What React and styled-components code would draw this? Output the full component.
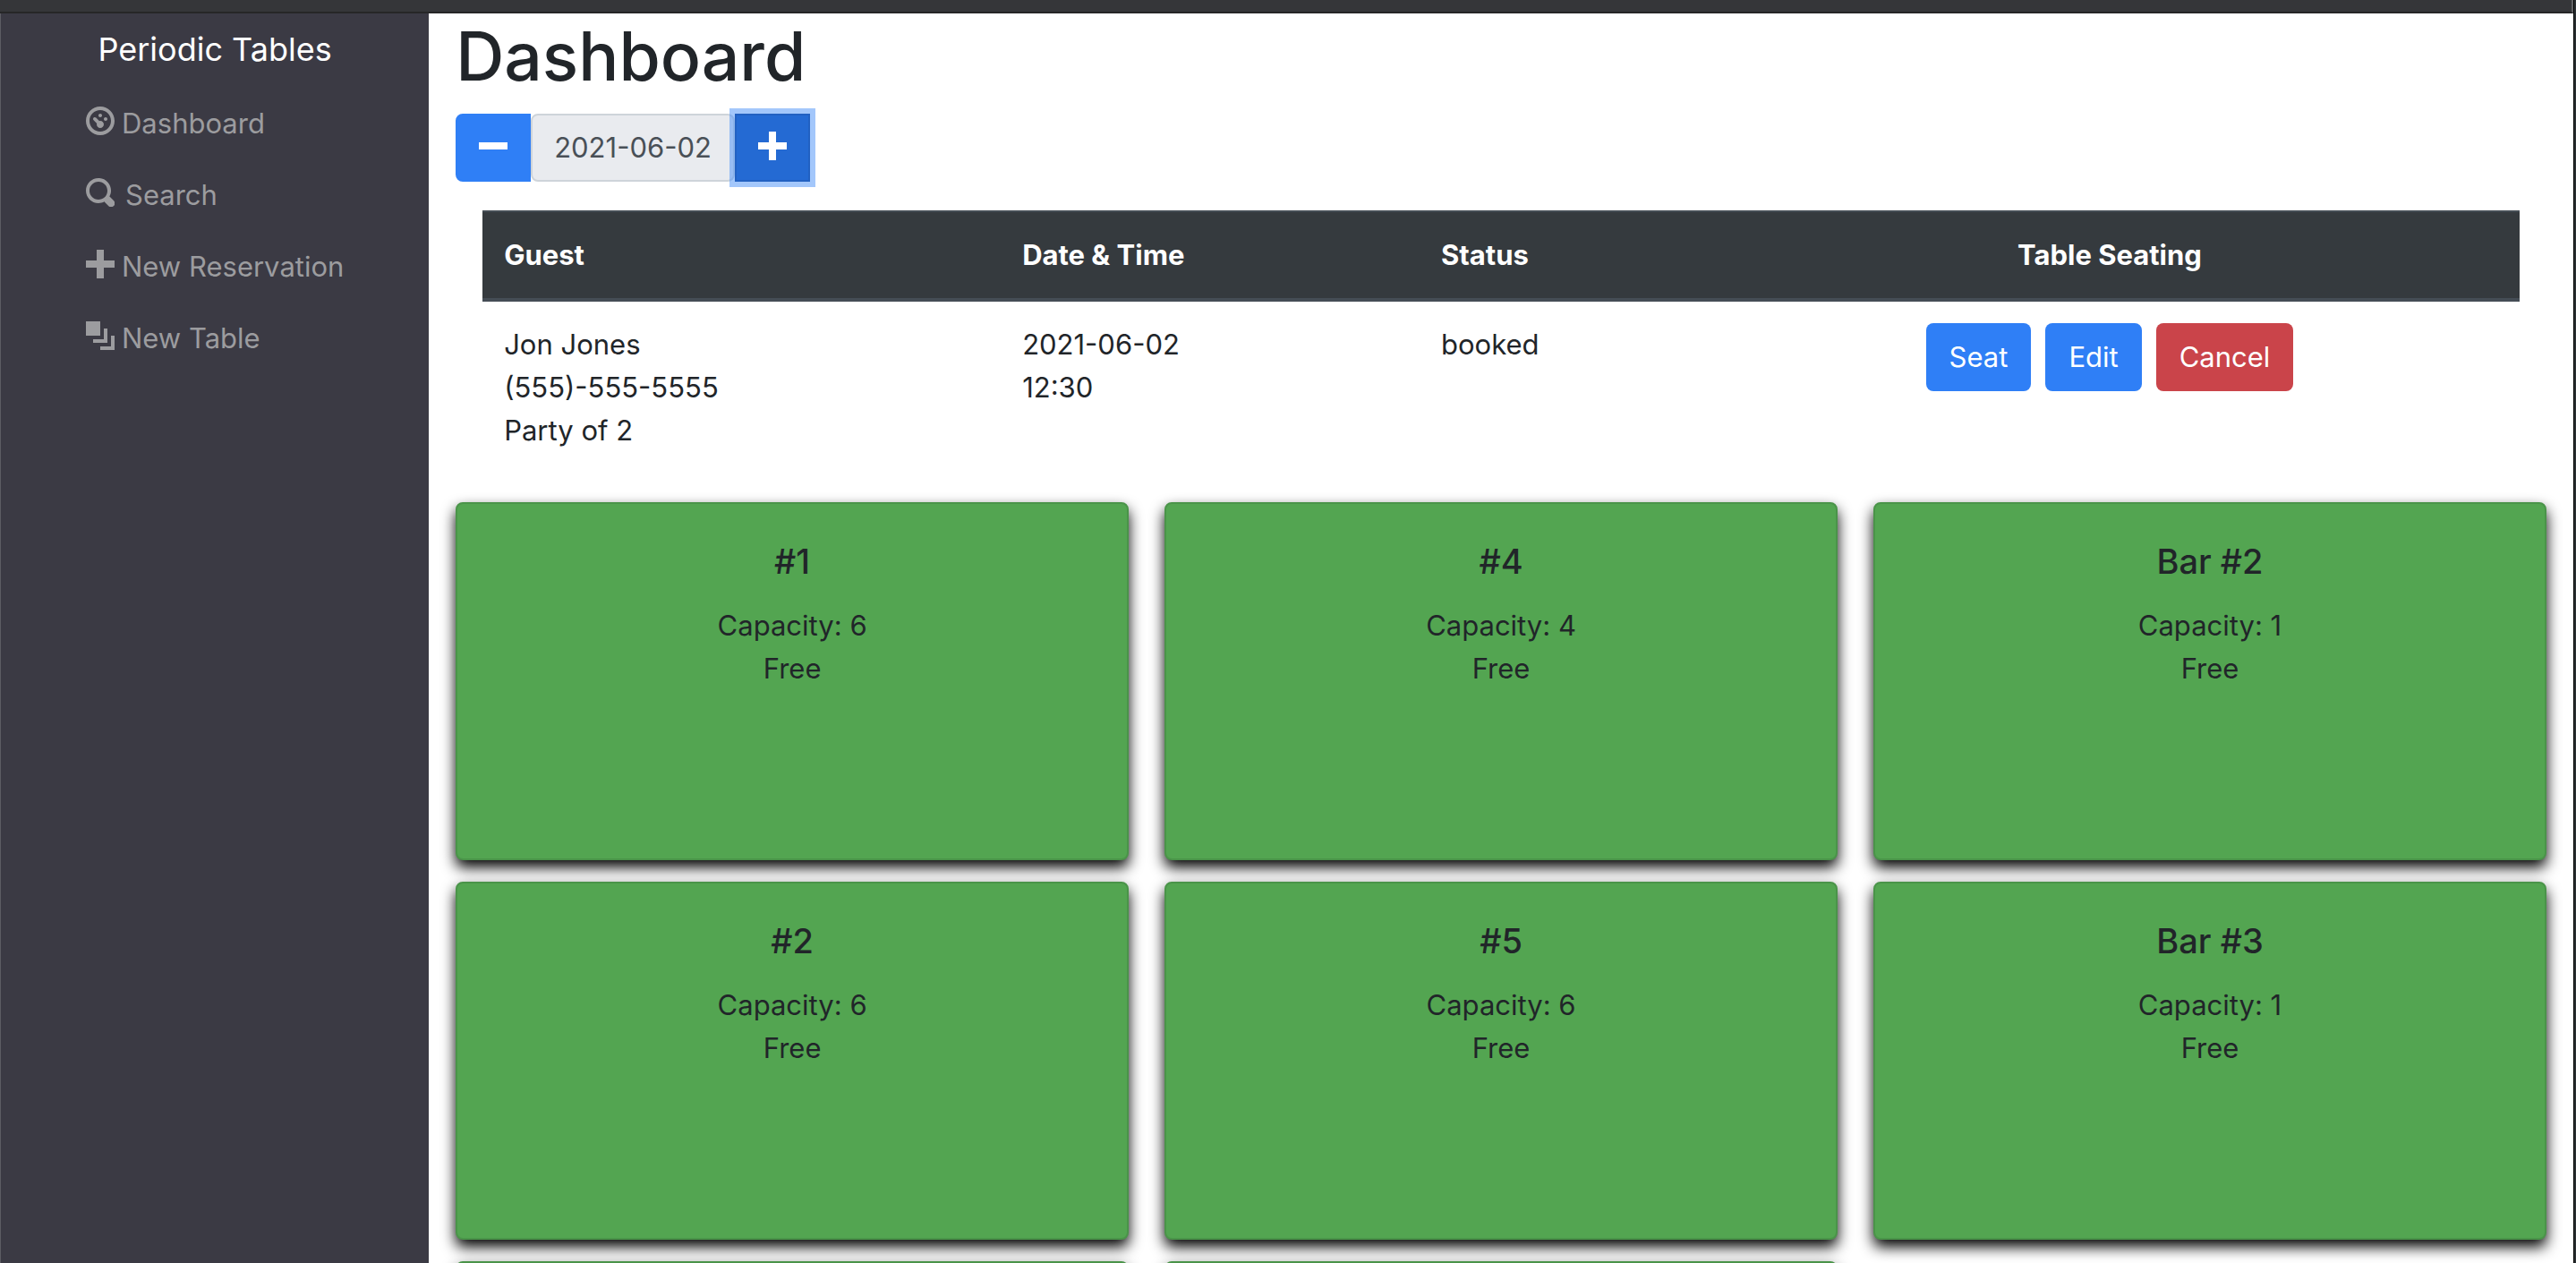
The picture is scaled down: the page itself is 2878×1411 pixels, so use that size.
import React from "react";
import styled, { createGlobalStyle } from "styled-components";

const GlobalStyle = createGlobalStyle`
  *, *::before, *::after { box-sizing: border-box; }
  body {
    margin: 0;
    background: #fff;
    color: #212529;
    font-family: Inter, "Liberation Sans", sans-serif;
    font-size: 31px;
    line-height: 48px;
  }
`;

const Desktop = styled.div`
  padding-right: 2px;
  background: #2c3033;
`;

const Window = styled.div`
  display: flex;
  flex-direction: column;
  height: 100vh;
  overflow: hidden;
  border-right: 1px solid #000;
  background: #fff;
`;

const TopBar = styled.div`
  flex: none;
  height: 15px;
  background: #353639;
  border-right: 2px solid #626365;
  border-bottom: 2px solid #262627;
`;

const Layout = styled.div`
  flex: 1;
  min-height: 0;
  display: grid;
  grid-template-columns: 1fr 5fr;
`;

const Sidebar = styled.nav`
  border-left: 1px solid #5c5c63;
  background: #3b3a44;
`;

const Brand = styled.a`
  display: block;
  padding: 10px 0 13px;
  text-align: center;
  color: #fff;
  font-size: 36px;
  line-height: 60px;
  text-decoration: none;
`;

const NavList = styled.ul`
  list-style: none;
  margin: 0;
  padding: 0 0 0 95px;
`;

const NavLink = styled.a`
  display: flex;
  align-items: center;
  gap: ${(p) => (p.$wide ? 12 : 8)}px;
  padding: 16px 0;
  color: #9c9c9f;
  text-decoration: none;
`;

const Glyph = styled.svg`
  flex: none;
  width: 32px;
  height: 32px;
  margin-bottom: 6px;
  fill: currentColor;
`;

const Main = styled.main`
  min-width: 0;
  overflow: hidden;
  padding: 0 30px;
`;

const Title = styled.h1`
  margin: 0 0 16px;
  font-size: 75px;
  line-height: 96px;
  font-weight: 500;
`;

const DateGroup = styled.div`
  display: flex;
  margin-bottom: 32px;
`;

const DateText = styled.span`
  padding: 12px 24px;
  border: 2px solid #ced4da;
  border-radius: 8px;
  background: #e9ebef;
  color: #495057;
`;

const StepButton = styled.button`
  display: flex;
  align-items: center;
  justify-content: center;
  width: 84px;
  height: 76px;
  padding: 2px 0 0;
  border: 2px solid ${(p) => (p.$active ? "#2261c2" : "#2f7ff6")};
  border-radius: ${(p) => (p.$active ? "0" : "8px 0 0 8px")};
  background: ${(p) => (p.$active ? "#246ad3" : "#2f7ff6")};
  box-shadow: ${(p) => (p.$active ? "0 0 0 6px rgba(72, 143, 247, 0.5)" : "none")};
  color: #fff;
`;

const Reservations = styled.table`
  width: calc(100% - 60px);
  margin: 0 30px 32px;
  table-layout: fixed;
  border-collapse: separate;
  border-spacing: 0;
`;

const Col = styled.col`
  width: ${(p) => p.$share};
`;

const HeadCell = styled.th`
  padding: 24px;
  border-top: 2px solid #454d55;
  border-bottom: 4px solid #454d55;
  background: #353a3e;
  color: #fff;
  font-weight: 700;
  text-align: ${(p) => (p.$center ? "center" : "left")};
`;

const Cell = styled.td`
  padding: 24px;
  vertical-align: top;
`;

const Actions = styled.div`
  display: flex;
  justify-content: center;
  gap: 16px;
`;

const ActionButton = styled.button`
  padding: 14px 26px;
  border: 0;
  border-radius: 8px;
  background: ${(p) => (p.$danger ? "#ca444a" : "#2f7ff6")};
  color: #fff;
  font: inherit;
`;

const CardColumns = styled.section`
  columns: 3;
  column-gap: 40px;
  orphans: 1;
  widows: 1;
`;

const Card = styled.article`
  display: inline-block;
  vertical-align: top;
  width: 100%;
  height: 400px;
  margin-bottom: 24px;
  padding: 40px;
  border: 2px solid #4a9449;
  border-radius: 8px;
  background: #53a551;
  box-shadow: 0 8px 16px #000;
  text-align: center;
`;

const CardTitle = styled.h2`
  margin: 0 0 24px;
  font-size: 38px;
  line-height: 48px;
  font-weight: 500;
`;

const CardText = styled.p`
  margin: 0;
`;

const icons = {
  dashboard:
    "M4 0c-2.2 0-4 1.8-4 4s1.8 4 4 4 4-1.8 4-4-1.8-4-4-4zm0 1c1.66 0 3 1.34 3 3s-1.34 3-3 3-3-1.34-3-3 1.34-3 3-3zm0 1c-.28 0-.5.22-.5.5s.22.5.5.5.5-.22.5-.5-.22-.5-.5-.5zm-1.66 1a.5.5 0 0 0-.19.84l.91.91c-.02.08-.06.16-.06.25 0 .55.45 1 1 1s1-.45 1-1-.45-1-1-1c-.09 0-.17.04-.25.06l-.91-.91a.5.5 0 0 0-.44-.16.5.5 0 0 0-.06 0zm3.16 0c-.28 0-.5.22-.5.5s.22.5.5.5.5-.22.5-.5-.22-.5-.5-.5z",
  search:
    "M3.5 0c-1.93 0-3.5 1.57-3.5 3.5s1.57 3.5 3.5 3.5c.59 0 1.17-.14 1.66-.41a1 1 0 0 0 .13.13l1 1a1.02 1.02 0 1 0 1.44-1.44l-1-1a1 1 0 0 0-.16-.13c.27-.49.44-1.06.44-1.66 0-1.93-1.55-3.5-3.5-3.5zm0 1c1.39 0 2.5 1.1 2.5 2.5 0 .66-.24 1.27-.66 1.72-.01.01-.02.02-.03.03a1 1 0 0 0-.13.13c-.44.4-1.04.63-1.69.63-1.4 0-2.5-1.11-2.5-2.5s1.1-2.5 2.5-2.5z",
  plus: "M3 0v3h-3v2h3v3h2v-3h3v-2h-3v-3h-2z",
  minus: "M0 3v2h8v-2h-8z",
  layers: "M0 0v4h4v-4h-4zm5 2v3h-3v1h4v-4h-1zm2 2v3h-3v1h4v-4h-1z",
};

function Icon({ name }) {
  return (
    <Glyph viewBox="0 0 8 8" aria-hidden="true">
      <path d={icons[name]} />
    </Glyph>
  );
}

const links = [
  { icon: "dashboard", label: "Dashboard" },
  { icon: "search", label: "Search", wide: true },
  { icon: "plus", label: "New Reservation" },
  { icon: "layers", label: "New Table" },
];

// Entries without a name draw a blank card.
const tables = [
  { id: 1, name: "#1", capacity: 6 },
  { id: 2, name: "#2", capacity: 6 },
  { id: 3 },
  { id: 4, name: "#4", capacity: 4 },
  { id: 5, name: "#5", capacity: 6 },
  { id: 6 },
  { id: 7, name: "Bar #2", capacity: 1 },
  { id: 8, name: "Bar #3", capacity: 1 },
];

export default function App() {
  return (
    <Desktop>
      <GlobalStyle />
      <Window>
        <TopBar />
        <Layout>
          <Sidebar>
            <Brand href="#">Periodic Tables</Brand>
            <NavList>
              {links.map((link) => (
                <li key={link.label}>
                  <NavLink href="#" $wide={link.wide}>
                    <Icon name={link.icon} />
                    {link.label}
                  </NavLink>
                </li>
              ))}
            </NavList>
          </Sidebar>
          <Main>
            <Title>Dashboard</Title>
            <DateGroup>
              <StepButton type="button" aria-label="Previous day">
                <Icon name="minus" />
              </StepButton>
              <DateText>2021-06-02</DateText>
              <StepButton type="button" aria-label="Next day" $active>
                <Icon name="plus" />
              </StepButton>
            </DateGroup>
            <Reservations>
              <colgroup>
                <Col $share="25.44%" />
                <Col $share="20.56%" />
                <Col $share="13.75%" />
                <Col $share="40.25%" />
              </colgroup>
              <thead>
                <tr>
                  <HeadCell scope="col">Guest</HeadCell>
                  <HeadCell scope="col">Date &amp; Time</HeadCell>
                  <HeadCell scope="col">Status</HeadCell>
                  <HeadCell scope="col" $center>Table Seating</HeadCell>
                </tr>
              </thead>
              <tbody>
                <tr>
                  <Cell>
                    Jon Jones
                    <br />
                    (555)-555-5555
                    <br />
                    Party of 2
                  </Cell>
                  <Cell>
                    2021-06-02
                    <br />
                    12:30
                  </Cell>
                  <Cell>booked</Cell>
                  <Cell>
                    <Actions>
                      <ActionButton type="button">Seat</ActionButton>
                      <ActionButton type="button">Edit</ActionButton>
                      <ActionButton type="button" $danger>Cancel</ActionButton>
                    </Actions>
                  </Cell>
                </tr>
              </tbody>
            </Reservations>
            <CardColumns>
              {tables.map((table) => (
                <Card key={table.id}>
                  {table.name && (
                    <>
                      <CardTitle>{table.name}</CardTitle>
                      <CardText>Capacity: {table.capacity}</CardText>
                      <CardText>Free</CardText>
                    </>
                  )}
                </Card>
              ))}
            </CardColumns>
          </Main>
        </Layout>
      </Window>
    </Desktop>
  );
}
